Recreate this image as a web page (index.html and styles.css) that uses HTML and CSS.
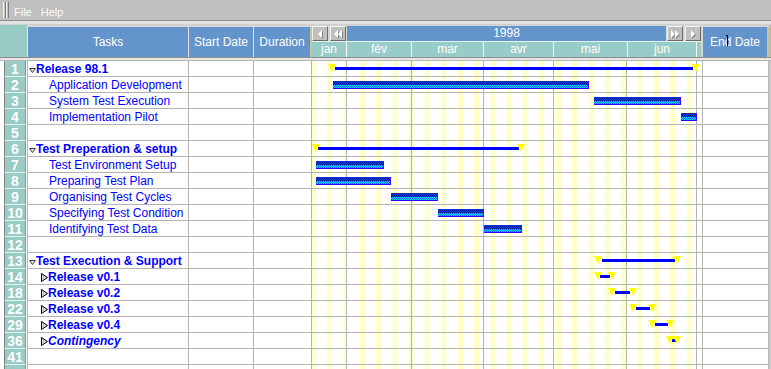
FILE: index.html
```html
<!DOCTYPE html>
<html lang="en">
<head>
    <meta charset="UTF-8">
    <title>Project Gantt</title>
    <link rel="stylesheet" href="styles.css">
</head>
<body>

<div class="menubar">
    <span class="grip"></span>
    <span class="menu first">File</span>
    <span class="menu">Help</span>
</div>
<div class="gap"></div>

<div class="head">
    <div class="corner"></div>
    <div class="hcell">Tasks</div>
    <div class="hcell">Start Date</div>
    <div class="hcell dur">Duration</div>
    <div class="timehead">
        <div class="yearbar">
            <span class="btn"><svg width="6" height="8" viewBox="0 0 6 8"><polygon points="5,0 5,8 1,4" fill="#fff"/></svg></span>
            <span class="btn"><svg width="10" height="8" viewBox="0 0 10 8"><polygon points="5,0 5,8 1,4" fill="#fff"/><polygon points="9,0 9,8 5,4" fill="#fff"/></svg></span>
            <span class="year">1998</span>
            <span class="btn"><svg width="10" height="8" viewBox="0 0 10 8"><polygon points="1,0 1,8 5,4" fill="#fff"/><polygon points="5,0 5,8 9,4" fill="#fff"/></svg></span>
            <span class="btn"><svg width="6" height="8" viewBox="0 0 6 8"><polygon points="1,0 1,8 5,4" fill="#fff"/></svg></span>
        </div>
        <div class="months">
            <span class="m-jan">jan</span>
            <span class="m-feb">fév</span>
            <span class="m-mar">mar</span>
            <span class="m-apr">avr</span>
            <span class="m-may">mai</span>
            <span class="m-jun">jun</span>
            <span class="m-end"></span>
        </div>
    </div>
    <div class="hcell end">End Date<i class="cursor"></i></div>
    <div class="rest"></div>
</div>
<div class="headline"></div>

<div class="rows">
    <div class="row">
        <div class="num"><b>1</b></div>
        <div class="task sum"><svg class="fold" width="7" height="5" viewBox="0 0 7 5"><polygon points="0.5,0.5 6.5,0.5 3.5,4.5" fill="#e4e4e4" stroke="#404040"/></svg>Release 98.1</div>
        <div class="cell"></div><div class="cell"></div>
        <div class="gantt">
            <i class="line" style="left:23px;width:358px"></i>
            <i class="tri" style="left:16px"></i>
            <i class="tri" style="left:380px"></i>
        </div>
        <div class="cell"></div><div class="rest"></div>
    </div>
    <div class="row">
        <div class="num"><b>2</b></div>
        <div class="task sub">Application Development</div>
        <div class="cell"></div><div class="cell"></div>
        <div class="gantt"><i class="bar" style="left:21px;width:256px"></i></div>
        <div class="cell"></div><div class="rest"></div>
    </div>
    <div class="row">
        <div class="num"><b>3</b></div>
        <div class="task sub">System Test Execution</div>
        <div class="cell"></div><div class="cell"></div>
        <div class="gantt"><i class="bar" style="left:282px;width:87px"></i></div>
        <div class="cell"></div><div class="rest"></div>
    </div>
    <div class="row">
        <div class="num"><b>4</b></div>
        <div class="task sub">Implementation Pilot</div>
        <div class="cell"></div><div class="cell"></div>
        <div class="gantt"><i class="bar" style="left:369px;width:16px"></i></div>
        <div class="cell"></div><div class="rest"></div>
    </div>
    <div class="row">
        <div class="num"><b>5</b></div>
        <div class="task"></div>
        <div class="cell"></div><div class="cell"></div>
        <div class="gantt"></div>
        <div class="cell"></div><div class="rest"></div>
    </div>
    <div class="row">
        <div class="num"><b>6</b></div>
        <div class="task sum"><svg class="fold" width="7" height="5" viewBox="0 0 7 5"><polygon points="0.5,0.5 6.5,0.5 3.5,4.5" fill="#e4e4e4" stroke="#404040"/></svg>Test Preperation &amp; setup</div>
        <div class="cell"></div><div class="cell"></div>
        <div class="gantt">
            <i class="line" style="left:6px;width:201px"></i>
            <i class="tri" style="left:0px"></i>
            <i class="tri" style="left:205px"></i>
        </div>
        <div class="cell"></div><div class="rest"></div>
    </div>
    <div class="row">
        <div class="num"><b>7</b></div>
        <div class="task sub">Test Environment Setup</div>
        <div class="cell"></div><div class="cell"></div>
        <div class="gantt"><i class="bar" style="left:4px;width:68px"></i></div>
        <div class="cell"></div><div class="rest"></div>
    </div>
    <div class="row">
        <div class="num"><b>8</b></div>
        <div class="task sub">Preparing Test Plan</div>
        <div class="cell"></div><div class="cell"></div>
        <div class="gantt"><i class="bar" style="left:4px;width:75px"></i></div>
        <div class="cell"></div><div class="rest"></div>
    </div>
    <div class="row">
        <div class="num"><b>9</b></div>
        <div class="task sub">Organising Test Cycles</div>
        <div class="cell"></div><div class="cell"></div>
        <div class="gantt"><i class="bar" style="left:79px;width:47px"></i></div>
        <div class="cell"></div><div class="rest"></div>
    </div>
    <div class="row">
        <div class="num"><b>10</b></div>
        <div class="task sub">Specifying Test Condition</div>
        <div class="cell"></div><div class="cell"></div>
        <div class="gantt"><i class="bar" style="left:126px;width:46px"></i></div>
        <div class="cell"></div><div class="rest"></div>
    </div>
    <div class="row">
        <div class="num"><b>11</b></div>
        <div class="task sub">Identifying Test Data</div>
        <div class="cell"></div><div class="cell"></div>
        <div class="gantt"><i class="bar" style="left:172px;width:38px"></i></div>
        <div class="cell"></div><div class="rest"></div>
    </div>
    <div class="row">
        <div class="num"><b>12</b></div>
        <div class="task"></div>
        <div class="cell"></div><div class="cell"></div>
        <div class="gantt"></div>
        <div class="cell"></div><div class="rest"></div>
    </div>
    <div class="row">
        <div class="num"><b>13</b></div>
        <div class="task sum"><svg class="fold" width="7" height="5" viewBox="0 0 7 5"><polygon points="0.5,0.5 6.5,0.5 3.5,4.5" fill="#e4e4e4" stroke="#404040"/></svg>Test Execution &amp; Support</div>
        <div class="cell"></div><div class="cell"></div>
        <div class="gantt">
            <i class="line" style="left:290px;width:73px"></i>
            <i class="tri" style="left:282px"></i>
            <i class="tri" style="left:361px"></i>
        </div>
        <div class="cell"></div><div class="rest"></div>
    </div>
    <div class="row">
        <div class="num"><b>14</b></div>
        <div class="task grp"><svg class="open" width="7" height="9" viewBox="0 0 7 9"><polygon points="0.5,0.5 6.5,4.5 0.5,8.5" fill="#d4d4d4" stroke="#000"/></svg>Release v0.1</div>
        <div class="cell"></div><div class="cell"></div>
        <div class="gantt">
            <i class="line" style="left:288px;width:10px"></i>
            <i class="tri" style="left:282px"></i>
            <i class="tri" style="left:296px"></i>
        </div>
        <div class="cell"></div><div class="rest"></div>
    </div>
    <div class="row">
        <div class="num"><b>18</b></div>
        <div class="task grp"><svg class="open" width="7" height="9" viewBox="0 0 7 9"><polygon points="0.5,0.5 6.5,4.5 0.5,8.5" fill="#d4d4d4" stroke="#000"/></svg>Release v0.2</div>
        <div class="cell"></div><div class="cell"></div>
        <div class="gantt">
            <i class="line" style="left:303px;width:15px"></i>
            <i class="tri" style="left:296px"></i>
            <i class="tri" style="left:317px"></i>
        </div>
        <div class="cell"></div><div class="rest"></div>
    </div>
    <div class="row">
        <div class="num"><b>22</b></div>
        <div class="task grp"><svg class="open" width="7" height="9" viewBox="0 0 7 9"><polygon points="0.5,0.5 6.5,4.5 0.5,8.5" fill="#d4d4d4" stroke="#000"/></svg>Release v0.3</div>
        <div class="cell"></div><div class="cell"></div>
        <div class="gantt">
            <i class="line" style="left:324px;width:14px"></i>
            <i class="tri" style="left:317px"></i>
            <i class="tri" style="left:336px"></i>
        </div>
        <div class="cell"></div><div class="rest"></div>
    </div>
    <div class="row">
        <div class="num"><b>29</b></div>
        <div class="task grp"><svg class="open" width="7" height="9" viewBox="0 0 7 9"><polygon points="0.5,0.5 6.5,4.5 0.5,8.5" fill="#d4d4d4" stroke="#000"/></svg>Release v0.4</div>
        <div class="cell"></div><div class="cell"></div>
        <div class="gantt">
            <i class="line" style="left:343px;width:13px"></i>
            <i class="tri" style="left:336px"></i>
            <i class="tri" style="left:354px"></i>
        </div>
        <div class="cell"></div><div class="rest"></div>
    </div>
    <div class="row">
        <div class="num"><b>36</b></div>
        <div class="task grp it"><svg class="open" width="7" height="9" viewBox="0 0 7 9"><polygon points="0.5,0.5 6.5,4.5 0.5,8.5" fill="#d4d4d4" stroke="#000"/></svg>Contingency</div>
        <div class="cell"></div><div class="cell"></div>
        <div class="gantt">
            <i class="line" style="left:360px;width:4px"></i>
            <i class="tri" style="left:354px"></i>
            <i class="tri" style="left:361px"></i>
        </div>
        <div class="cell"></div><div class="rest"></div>
    </div>
    <div class="row">
        <div class="num"><b>41</b></div>
        <div class="task"></div>
        <div class="cell"></div><div class="cell"></div>
        <div class="gantt"></div>
        <div class="cell"></div><div class="rest"></div>
    </div>
    <div class="row">
        <div class="num"><b></b></div>
        <div class="task"></div>
        <div class="cell"></div><div class="cell"></div>
        <div class="gantt"></div>
        <div class="cell"></div><div class="rest"></div>
    </div>
</div>

</body>
</html>
```

FILE: styles.css
```css
html, body {
    height: 369px;
    overflow: hidden;
}
body {
    margin: 0;
    font-family: "Liberation Sans", Arial, sans-serif;
    font-size: 12px;
    background: #fff;
}

/* menu */
.menubar {
    height: 21px;
    box-sizing: border-box;
    display: flex;
    padding: 2px 0 2px 3px;
    background: #c0c0c0;
    border-bottom: 1px solid #8c8c8c;
    font-size: 11px;
    color: #fafafa;
}
.grip {
    flex: none;
    width: 6px;
    height: 16px;
    background: linear-gradient(90deg, #f4f4f4 0 1px, #c0c0c0 1px 2px, #7c7c7c 2px 3px, #f4f4f4 3px 4px, #c0c0c0 4px 5px, #7c7c7c 5px 6px);
}
.menu {
    padding-top: 4px;
    line-height: 13px;
}
.menu.first { margin-left: 5px; }
.menu + .menu { margin-left: 9px; }
.gap {
    height: 3px;
    background: #e2e2e2;
    border-bottom: 1px solid #cfcfcf;
}

/* header */
.head {
    display: grid;
    grid-template-columns: 28px 161px 65px 58px 391px 66px 2px;
    height: 32px;
    background: #d6d6d6;
}
.corner {
    background: #98ccc4;
    border-right: 1px solid #e8e8e8;
}
.hcell {
    margin-top: 2px;
    background: #6394cc;
    color: #fff;
    display: flex;
    align-items: center;
    justify-content: center;
    border-right: 1px solid #dedee6;
    position: relative;
}
.hcell.dur { border-right: 2px solid #c6c68e; }
.hcell.end { border-right: 2px solid #c6c68e; }
.head .rest { background: #b8b8b8; }
.cursor {
    position: absolute;
    left: 24px;
    top: 8px;
    width: 1px;
    height: 11px;
    background: #000;
}
.cursor::before {
    content: '';
    position: absolute;
    left: -1px;
    top: 0;
    width: 2px;
    height: 1px;
    background: #000;
}

.timehead {
    padding: 1px 2px 0 0;
}
.yearbar {
    display: flex;
    height: 15px;
    gap: 1px;
}
.btn {
    width: 16px;
    box-sizing: border-box;
    background: #c0c0c0;
    border: 1px solid;
    border-color: #f2f2f2 #6c6c6c #6c6c6c #f2f2f2;
    display: flex;
    align-items: center;
    justify-content: center;
}
.btn + .btn { margin-left: 1px; }
.btn svg { filter: drop-shadow(1px 1px 0 #808080); }
.year {
    flex: 1;
    background: #6394cc;
    color: #fff;
    text-align: center;
    line-height: 15px;
}
.months {
    display: flex;
    height: 16px;
    box-sizing: border-box;
    border-top: 1px solid #e6f2f0;
    background: #98ccc8;
    color: #fff;
    line-height: 15px;
}
.months span {
    text-align: center;
    box-sizing: border-box;
}
.months span + span { border-left: 1px solid #fff; }
.m-jan { width: 34px; }
.m-feb { width: 65px; }
.m-mar { width: 72px; }
.m-apr { width: 70px; }
.m-may { width: 74px; }
.m-jun { width: 69px; }
.m-end { width: 5px; }

.headline {
    height: 4px;
    box-sizing: border-box;
    border-top: 1px solid #8c8c8c;
    border-bottom: 1px solid #b4b4b4;
    background: #e6e6e6;
}

/* rows */
.row {
    display: grid;
    grid-template-columns: 28px 161px 65px 58px 391px 66px 2px;
    height: 16px;
}
.row > div {
    box-sizing: border-box;
}
.num {
    padding: 0 1px 0 4px;
    border-right: 1px solid #b4b4b4;
}
.num b {
    display: block;
    height: 16px;
    box-sizing: border-box;
    padding-top: 1px;
    background: #98ccc4;
    border-left: 1px solid #808080;
    border-right: 1px solid #6f9f98;
    border-bottom: 1px solid #e2f0ee;
    color: #fff;
    font-size: 14px;
    line-height: 15px;
    text-align: center;
}
.task, .cell, .gantt {
    border-right: 1px solid #b4b4b4;
    border-bottom: 1px solid #b4b4b4;
}
.row .rest { background: #c8c8c8; }
.task {
    display: flex;
    align-items: center;
    padding-top: 2px;
    color: #0000ff;
    white-space: nowrap;
    overflow: hidden;
    line-height: 13px;
}
.task.sum { padding-left: 1px; font-weight: bold; }
.task.sub { padding-left: 21px; }
.task.grp { padding-left: 13px; font-weight: bold; }
.task.it { font-style: italic; }
.fold { margin-top: 1px; flex: none; }
.open { margin-top: 0; flex: none; }

/* timeline */
.gantt {
    position: relative;
    background:
        linear-gradient(90deg, transparent 34px, #b4b4b4 34px 35px, transparent 35px 99px, #b4b4b4 99px 100px, transparent 100px 171px, #b4b4b4 171px 172px, transparent 172px 241px, #b4b4b4 241px 242px, transparent 242px 314px, #b4b4b4 314px 315px, transparent 315px 384px, #b4b4b4 384px 385px, transparent 385px),
        repeating-linear-gradient(90deg, #ffffc8 -1px, #ffffc8 3.667px, transparent 3.667px, transparent 15.333px),
        #fff;
}
.gantt i {
    position: absolute;
}
.line {
    top: 6px;
    height: 3px;
    background: #0000ff;
}
.tri {
    top: 3px;
    width: 8px;
    height: 8px;
    background: #ffff00;
    clip-path: polygon(0 0, 100% 0, 50% 100%);
}
.bar {
    top: 4px;
    height: 8px;
    box-sizing: border-box;
    border-bottom: 1px solid #2a00ff;
    border-right: 1px solid #4a00ff;
    background: repeating-conic-gradient(#10d8ff 0 25%, #0a5cff 0 50%) 0 0 / 2px 2px;
}
.bar::before {
    content: '';
    position: absolute;
    left: 0;
    right: 0;
    top: 0;
    height: 4px;
    background: repeating-conic-gradient(#00107a 0 25%, #1a44ff 0 50%) 0 0 / 2px 2px;
}
```
